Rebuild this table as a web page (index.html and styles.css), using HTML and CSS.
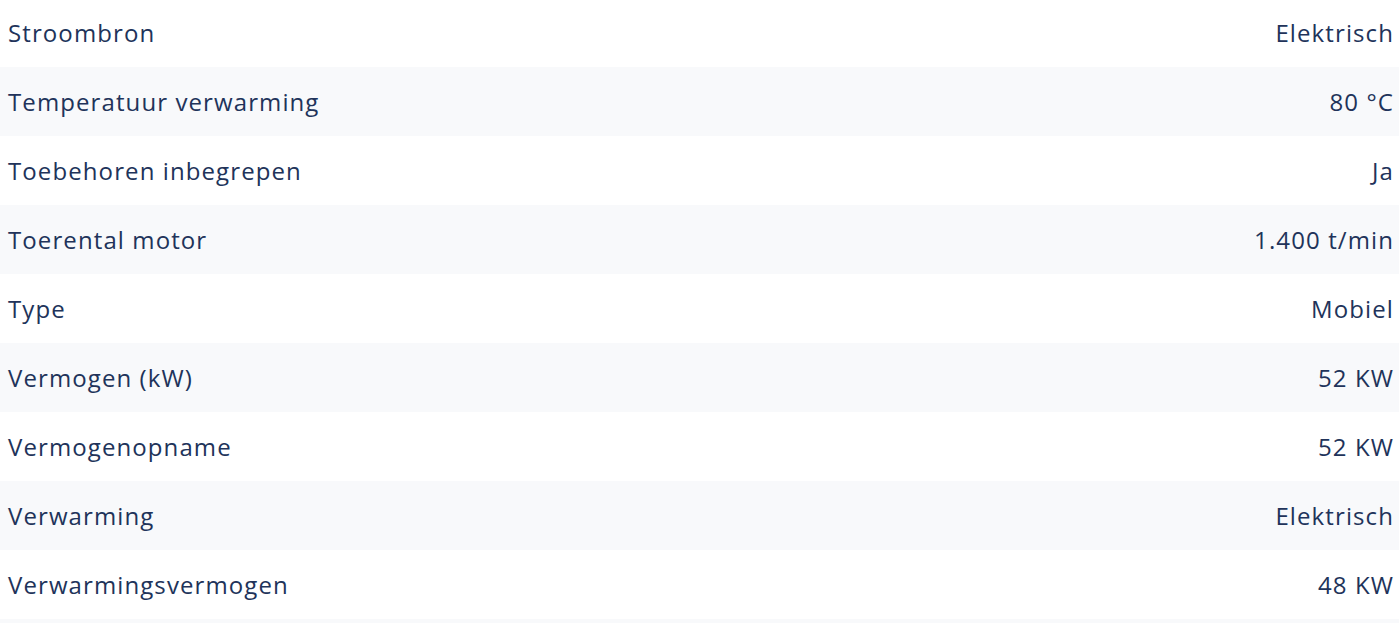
FILE: index.html
```html
<!DOCTYPE html>
<html lang="nl">
<head>
<meta charset="utf-8">
<title>Specificaties</title>
<link rel="stylesheet" href="styles.css">
</head>
<body>
<div class="specs">
  <div class="row"><span class="label">Stroombron</span><span class="value">Elektrisch</span></div>
  <div class="row"><span class="label">Temperatuur verwarming</span><span class="value">80 °C</span></div>
  <div class="row"><span class="label">Toebehoren inbegrepen</span><span class="value">Ja</span></div>
  <div class="row"><span class="label">Toerental motor</span><span class="value">1.400 t/min</span></div>
  <div class="row"><span class="label">Type</span><span class="value">Mobiel</span></div>
  <div class="row"><span class="label">Vermogen (kW)</span><span class="value">52 KW</span></div>
  <div class="row"><span class="label">Vermogenopname</span><span class="value">52 KW</span></div>
  <div class="row"><span class="label">Verwarming</span><span class="value">Elektrisch</span></div>
  <div class="row"><span class="label">Verwarmingsvermogen</span><span class="value">48 KW</span></div>
  <div class="row"></div>
</div>
</body>
</html>
```
FILE: styles.css
```css
html, body {
  margin: 0;
  padding: 0;
  background: #ffffff;
}
body {
  font-family: "Open Sans", "Liberation Sans", sans-serif;
  color: #21335a;
  overflow: hidden;
}
.specs {
  display: flex;
  flex-direction: column;
  margin-top: -2px;
}
.row {
  display: flex;
  justify-content: space-between;
  align-items: center;
  height: 69px;
  padding: 0 6px 0 8px;
  font-size: 24px;
  letter-spacing: 1.1px;
}
.value {
  margin-right: -1px;
}
.row:nth-child(even) {
  background: #f8f9fb;
}
```
